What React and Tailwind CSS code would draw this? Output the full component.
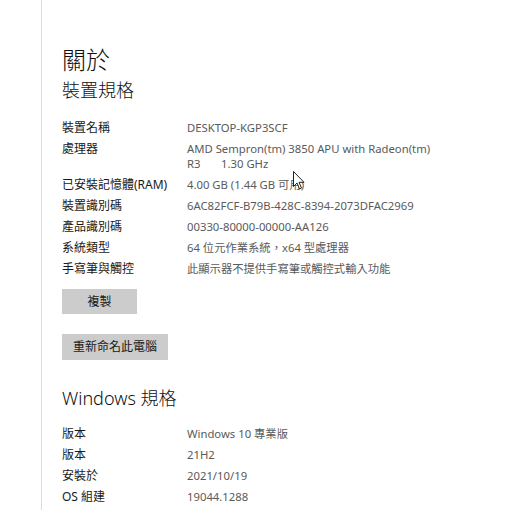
const deviceSpecs = [
  ['裝置名稱', ['DESKTOP-KGP3SCF']],
  ['處理器', ['AMD Sempron(tm) 3850 APU with Radeon(tm)', 'R3\u00a0\u00a0\u00a0\u00a0\u00a0\u00a0 1.30 GHz']],
  ['已安裝記憶體(RAM)', ['4.00 GB (1.44 GB 可用)']],
  ['裝置識別碼', ['6AC82FCF-B79B-428C-8394-2073DFAC2969']],
  ['產品識別碼', ['00330-80000-00000-AA126']],
  ['系統類型', ['64 位元作業系統，x64 型處理器']],
  ['手寫筆與觸控', ['此顯示器不提供手寫筆或觸控式輸入功能']],
];

const windowsSpecs = [
  ['版本', 'Windows 10 專業版'],
  ['版本', '21H2'],
  ['安裝於', '2021/10/19'],
  ['OS 組建', '19044.1288'],
];

function SpecRow({ label, lines }) {
  return (
    <div className="flex py-[3px] leading-[15px]">
      <div className="w-[125px] shrink-0 text-[12px] text-[#1a1a1a]">{label}</div>
      <div className="text-[11.3px] text-[#5a5a5a]">
        {lines.map((l, i) => (
          <div key={i}>{l}</div>
        ))}
      </div>
    </div>
  );
}

function Cursor() {
  return (
    <svg className="absolute left-[293px] top-[171px]" width="12" height="19" viewBox="0 0 12 19">
      <path
        d="M0.5 0.5 L0.5 15.5 L4 12 L6.5 18 L8.5 17 L6 11.3 L11 11.3 Z"
        fill="#fff"
        stroke="#222"
        strokeWidth="1"
        strokeLinejoin="round"
      />
    </svg>
  );
}

export default function App() {
  return (
    <div className="relative h-[510px] w-[510px] overflow-hidden bg-white">
      <div
        className="ml-[41px] h-full border-l border-[#dcdcdc] pl-[20px] text-[12px]"
        style={{ fontFamily: '"Noto Sans", "Noto Sans CJK TC", sans-serif' }}
      >
        <h1 className="pt-[44px] text-[24px] leading-[32px] font-light text-[#111]">關於</h1>
        <h2 className="mt-[1px] text-[18px] leading-[26px] font-light text-[#111]">裝置規格</h2>

        <div className="mt-[14px]">
          {deviceSpecs.map(([label, lines], i) => (
            <SpecRow key={i} label={label} lines={lines} />
          ))}
        </div>

        <button className="mt-[10px] block h-[25px] w-[75px] bg-[#cccccc] text-[#1a1a1a]">複製</button>
        <button className="mt-[20px] block h-[26px] w-[106px] bg-[#cccccc] text-[#1a1a1a]">重新命名此電腦</button>

        <h2 className="mt-[25px] text-[18px] leading-[26px] font-light text-[#111]">Windows 規格</h2>

        <div className="mt-[12px]">
          {windowsSpecs.map(([label, value], i) => (
            <SpecRow key={i} label={label} lines={[value]} />
          ))}
        </div>
      </div>
      <Cursor />
    </div>
  );
}
